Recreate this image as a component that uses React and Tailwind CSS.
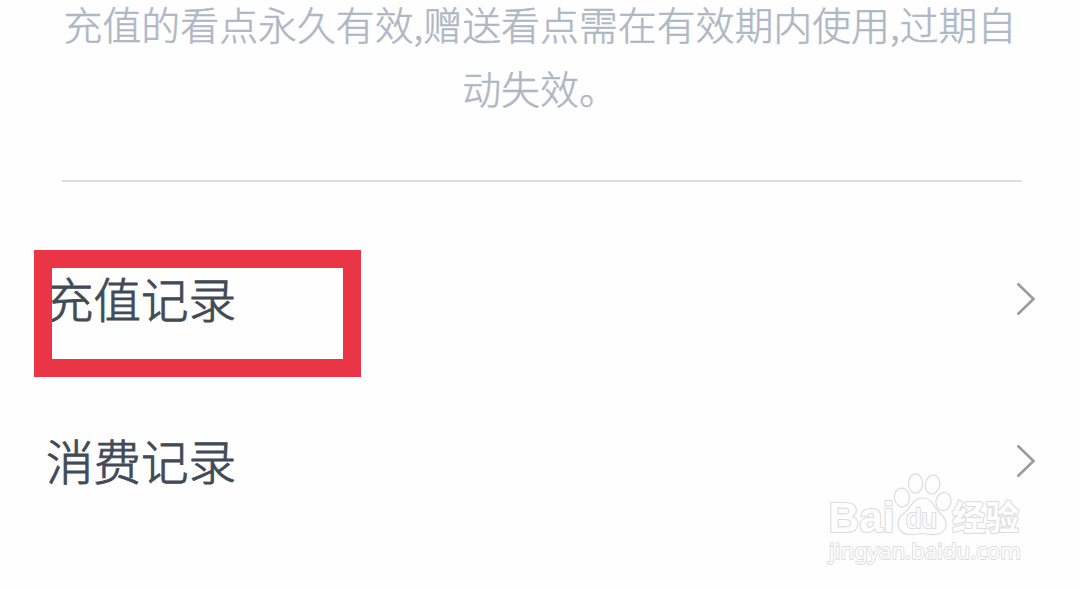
import React from 'react';

const records = [
    { label: '充值记录', highlighted: true },
    { label: '消费记录', highlighted: false },
];

function Chevron() {
    return (
        <svg className="w-5 h-9" viewBox="0 0 20 36" fill="none" stroke="#9b9b9b" strokeWidth="2.6">
            <path d="M1.5 2.5 17.500 18 1.5 33.5" />
        </svg>
    );
}

function RecordRow({ label, highlighted }) {
    return (
        <li className="relative h-[162px] flex items-center justify-between pl-[46px] pr-[44px]">
            <span className="mb-[3px] text-[47.5px] leading-[60px] font-light text-[#414b57] [-webkit-text-stroke:0.9px_#414b57]">{label}</span>
            <Chevron />
            {highlighted && (
                <div className="absolute left-[34px] top-[32px] w-[327px] h-[127px] border-[18px] border-[#e93545]" />
            )}
        </li>
    );
}

// outlined white lettering, the stroke is painted behind the fill
function Watermark() {
    return (
        <svg
            className="absolute left-[820px] top-[465px] w-[210px] h-[110px]"
            viewBox="0 0 210 110"
            fill="#fefefe"
            stroke="#dcdcdc"
            strokeWidth="1.2"
            strokeLinejoin="round"
        >
            <g paintOrder="stroke" strokeWidth="2.2">
                <text x="8.5" y="67" fontFamily="'Liberation Sans', sans-serif" fontSize="42" fontWeight="700" textLength="66" lengthAdjust="spacingAndGlyphs">Bai</text>
                <text x="132" y="65" fontFamily="'Noto Sans CJK SC', sans-serif" fontSize="34" fontWeight="700" textLength="67" lengthAdjust="spacingAndGlyphs">经验</text>
                <text x="9" y="93.500" fontFamily="'Noto Sans', sans-serif" fontSize="22" strokeWidth="1.8" textLength="192" lengthAdjust="spacingAndGlyphs">jingyan.baidu.com</text>
            </g>
            <ellipse cx="82" cy="32.5" rx="7.5" ry="9.5" transform="rotate(-8 82 32.5)" />
            <ellipse cx="95.5" cy="18.5" rx="7" ry="9.8" />
            <ellipse cx="112.5" cy="19.5" rx="7.2" ry="9.6" transform="rotate(12 112.5 19.5)" />
            <ellipse cx="123.5" cy="36.5" rx="7.5" ry="9.2" transform="rotate(12 123.5 36.5)" />
            <path d="M103 33C93 33 92 42 84 48C78 53 77 58 79 63C82 71 92 70 102 68.500C112 70 121 71 125 64C128 58 125 53 120 48C113 42 113 33 103 33Z" />
            <text x="86" y="63" paintOrder="stroke" strokeWidth="2" fontFamily="'Liberation Sans', sans-serif" fontSize="27" textLength="31" lengthAdjust="spacingAndGlyphs">du</text>
        </svg>
    );
}

export default function App() {
    return (
        <main className="relative w-full h-[589px] overflow-hidden bg-[#fefefe] font-['Noto_Sans_CJK_SC',sans-serif]">
            <div className="h-[180px] text-center text-[38.9px] font-light text-[#adb8c4] [-webkit-text-stroke:0.5px_#adb8c4] whitespace-nowrap">
                <p className="leading-[46px]">充值的看点永久有效,赠送看点需在有效期内使用,过期自</p>
                <p className="mt-[9px] leading-[64px]">动失效。</p>
            </div>
            <hr className="ml-[62px] mr-[58px] border-0 h-[2px] bg-[#dcdddf]" />
            <ul className="mt-[36px]">
                {records.map((record) => (
                    <RecordRow key={record.label} {...record} />
                ))}
            </ul>
            <Watermark />
        </main>
    );
}
